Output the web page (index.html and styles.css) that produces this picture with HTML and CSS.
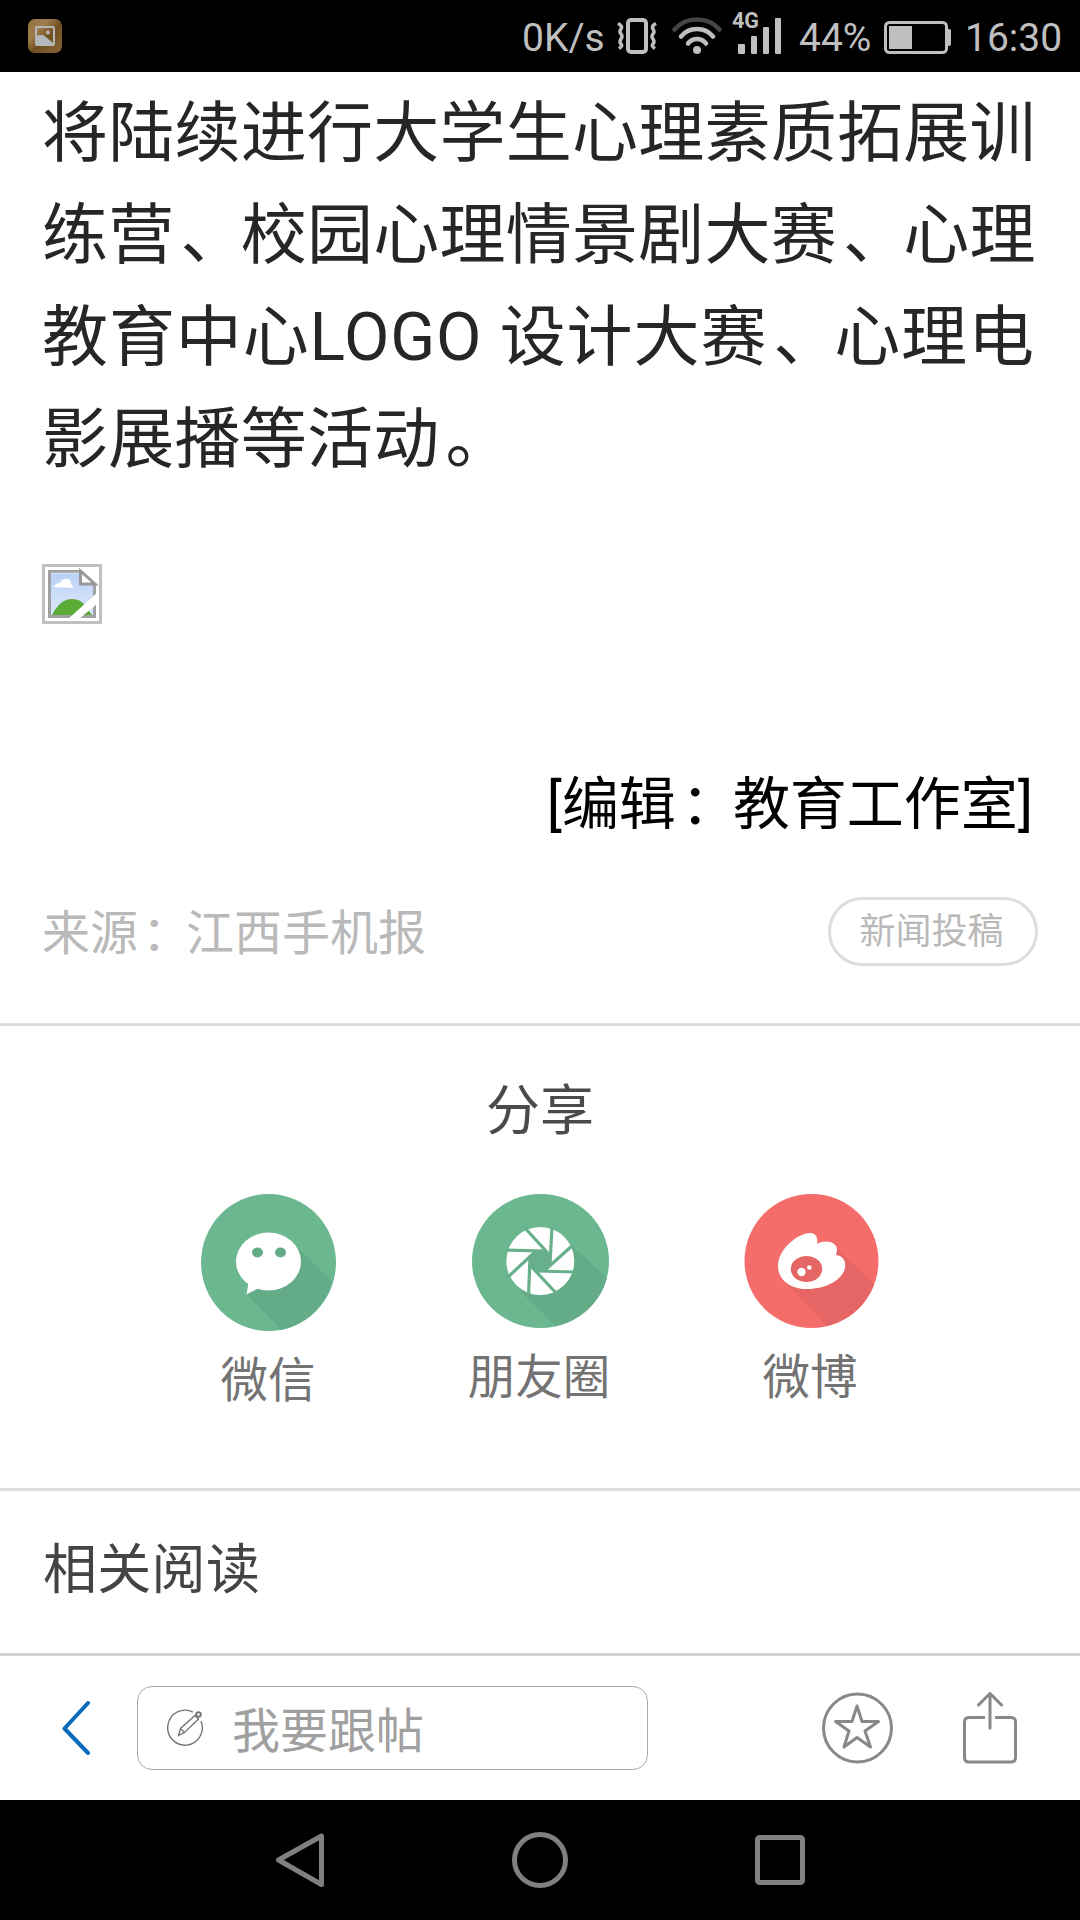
FILE: index.html
```html
<!DOCTYPE html>
<html lang="zh-CN">
<head>
<meta charset="utf-8">
<title>江西手机报</title>
<link rel="stylesheet" href="styles.css">
</head>
<body>
<header class="status">
  <svg class="notice" width="34" height="34" viewBox="0 0 34 34">
    <defs><linearGradient id="bronze" x1="0" y1="0" x2="1" y2="1"><stop offset="0" stop-color="#94703e"/><stop offset=".3" stop-color="#a17c4e"/><stop offset=".55" stop-color="#70501f"/><stop offset="1" stop-color="#8a6536"/></linearGradient></defs>
    <rect width="34" height="34" rx="7" fill="url(#bronze)"/>
    <rect x="8" y="8" width="18" height="18" rx="1" fill="none" stroke="#b4b8ba" stroke-width="2"/>
    <path d="M8 18l3-2h4l4 3 6 5v2H8z" fill="#b4b8ba"/><circle cx="20" cy="13.500" r="2" fill="#b4b8ba"/>
  </svg>
  <span class="speed">0K/s</span>
  <svg class="vibrate" width="40" height="36" viewBox="0 0 40 36" fill="none" stroke="#bfbfbf">
    <rect x="11" y="2" width="18" height="32" rx="3" stroke-width="4"/>
    <path d="M1 5.500q5 2.500 3 5.500t0 5 0 5 0 5-2 4.500M39 5.500q-5 2.500-3 5.500t0 5 0 5 0 5 2 4.500" stroke-width="3.500"/>
  </svg>
  <svg class="wifi" width="50" height="38" viewBox="0 0 50 38" fill="none" stroke="#bfbfbf" stroke-width="4.500" stroke-linecap="round">
    <path d="M2.500 12.500Q11 2.500 25 2.500t22.500 10" stroke="#444"/>
    <path d="M9 19.500q6-7.500 16-7.500t16 7.500M16 26.500q3.500-4.500 9-4.500t9 4.500"/><circle cx="25" cy="33" r="4" fill="#bfbfbf" stroke="none"/>
  </svg>
  <div class="signal"><span class="network">4G</span>
    <svg width="44" height="36" viewBox="0 0 44 36" fill="#bfbfbf"><rect width="7" height="10" y="26" rx="1"/><rect x="13" y="18" width="6" height="18" rx="1"/><rect x="25" y="9" width="6" height="27" rx="1"/><rect x="37" width="6" height="36" rx="1"/></svg>
  </div>
  <span class="percent">44%</span>
  <svg class="battery" width="67" height="33" viewBox="0 0 67 33"><rect x="1.500" y="1.500" width="61" height="30" rx="4" fill="none" stroke="#bfbfbf" stroke-width="3"/><path d="M5 5h23v23H5zM64 8h1q2 0 2 2v13q0 2-2 2h-1z" fill="#bfbfbf"/></svg>
  <span class="time">16:30</span>
</header>

<main class="page">
  <article class="article">
    <p class="body-text">将陆续进行大学生心理素质拓展训<br>练营<span class="mark">、</span>校园心理情景剧大赛<span class="mark">、</span>心理<br><span class="mixed">教育中心<span class="latin">LOGO </span>设计大赛<span class="mark">、</span>心理电</span><br>影展播等活动<span class="mark">。</span></p>
    <svg class="picture" width="60" height="60" viewBox="0 0 60 60">
      <defs><linearGradient id="sky" x1="0" y1="0" x2="0" y2="1"><stop offset="0" stop-color="#b9d0f5"/><stop offset="1" stop-color="#dde8fb"/></linearGradient></defs>
      <rect x="1.500" y="1.500" width="57" height="57" fill="#fff" stroke="#c0c0c0" stroke-width="3"/>
      <path d="M7.500 7.500H39L52.500 21V52.500H7.500z" fill="url(#sky)" stroke="#a0a0a0" stroke-width="3"/>
      <path d="M9 9h29" stroke="#fff" opacity=".5"/>
      <path d="M12 23q1-4 6-4 3-5 7-4 4 0 4 5 2 1 2 4z" fill="#fff"/>
      <path d="M10 51q8-16 20-16 8 0 13 6l7 10z" fill="#5aac37"/>
      <path d="M38.500 7v13H53z" fill="#fff" stroke="#999" stroke-width="3"/>
      <path d="M55 29L26 55h11l18-15z" fill="#fff"/>
    </svg>
    <p class="editor"><span class="bracket">[</span>编辑<span class="colon">：</span>教育工作室<span class="bracket">]</span></p>
    <div class="source"><p>来源<span class="colon">：</span>江西手机报</p><button class="submit">新闻投稿</button></div>
  </article>

  <section class="share">
    <h2 class="share-title">分享</h2>
    <div class="share-list">
      <a class="share-item wechat">
        <svg width="135" height="137" viewBox="0 0 135 137">
          <ellipse cx="67.500" cy="68.500" rx="67.500" ry="68.500" fill="#6ab790"/>
          <path d="M97 54L131 88A67.500 68.500 0 0 1 80 136L46 100z" fill="#64ab87"/>
          <ellipse cx="67.500" cy="67.500" rx="32.500" ry="29" fill="#fff"/><path d="M48 86l-2.500 14.500L60 93z" fill="#fff"/>
          <ellipse cx="56.500" cy="58.500" rx="5.500" ry="5" fill="#64ab87"/><ellipse cx="79.500" cy="58.500" rx="5.500" ry="5" fill="#64ab87"/>
        </svg><span>微信</span>
      </a>
      <a class="share-item moments">
        <svg width="137" height="134" viewBox="0 0 137 134">
          <ellipse cx="68.500" cy="67" rx="68.500" ry="67" fill="#6ab790"/>
          <path d="M98 50L135 84A68.500 67 0 0 1 84 132L46 95z" fill="#64ab87"/>
          <circle cx="68.300" cy="67" r="34" fill="#fff"/>
          <path d="M70 55.500L79.500 60 79 68 74 76 66 78.500 58 73 58 65 61 57z" fill="#67b08b"/>
          <g stroke="#67b08b" stroke-width="3.200"><path d="M53 34L79 62.500"/><path d="M80 33L78 70"/><path d="M101 51L72 77"/><path d="M104 78L65 77"/><path d="M84 99L57 70"/><path d="M56.500 102L58 64"/><path d="M36 83L64 57"/><path d="M34 56L72 57"/></g>
        </svg><span>朋友圈</span>
      </a>
      <a class="share-item weibo">
        <svg width="135" height="134" viewBox="0 0 135 134">
          <ellipse cx="67.500" cy="67" rx="67" ry="67" fill="#f56d6a"/>
          <path d="M92 53L130 90A67 67 0 0 1 83 132L45 92z" fill="#e56664"/>
          <path d="M34 72C34 56 52 40 66 39c7 0 8 6 7 11 9-5 20-2 20 6 0 2-1 3-1 5 8 1 10 7 9 13-2 11-18 21-38 21-18 0-29-10-29-23z" fill="#fff"/>
          <ellipse cx="62.500" cy="75" rx="15.700" ry="13" fill="#e56664"/><circle cx="57.500" cy="78" r="4.200" fill="#fff"/><circle cx="65.300" cy="73.500" r="2.300" fill="#fff"/>
        </svg><span>微博</span>
      </a>
    </div>
  </section>
  <h2 class="related">相关阅读</h2>
</main>

<footer class="toolbar">
  <svg class="back" width="28" height="56" viewBox="0 0 28 56" fill="none" stroke="#0a6bbd" stroke-width="4" stroke-linecap="round" stroke-linejoin="round"><path d="M26 3L2.500 28.500 26 53"/></svg>
  <div class="reply">
    <svg width="37" height="38" viewBox="0 0 37 38" fill="none" stroke="#777" stroke-width="1.400"><path d="M26 3.200A17.300 17.500 0 1 0 34 12"/><path d="M11.500 26.500l2-7L28 6.500l3.500 3.500L17.500 23.500zM13.500 19.500l4 4"/><circle cx="31.500" cy="5.500" r="2.300" stroke-width="2"/></svg>
    <span>我要跟帖</span>
  </div>
  <svg class="star" width="72" height="72" viewBox="0 0 72 72" fill="none" stroke="#888" stroke-width="3" stroke-linejoin="round"><circle cx="35.500" cy="36" r="34"/><path d="M35 14l5 15.500h16.500L43 39l5.500 16L35 45.500 22 55l5-16-13.500-9.500H30z"/></svg>
  <svg class="export" width="54" height="72" viewBox="0 0 54 72" fill="none" stroke="#888" stroke-width="3" stroke-linecap="round"><path d="M27 36V2M15.500 13L27 1.500 38.500 13"/><path d="M22 25.500H6Q1.500 25.500 1.500 30v35.500q0 4.500 4.500 4.500h42q4.500 0 4.500-4.500V30q0-4.500-4.500-4.500H32" stroke-linecap="butt"/></svg>
</footer>
<nav class="nav">
  <svg width="48" height="54" viewBox="0 0 48 54"><path d="M45.500 3v48.500L2.500 27z"/></svg>
  <svg width="56" height="56" viewBox="0 0 56 56"><circle cx="28" cy="28" r="25.500"/></svg>
  <svg width="50" height="50" viewBox="0 0 50 50"><rect x="2.500" y="2.500" width="45" height="45" rx="2"/></svg>
</nav>
</body>
</html>
```
FILE: styles.css
```css
* { box-sizing: border-box; margin: 0; padding: 0; }
body {
  width: 1080px; height: 1920px; overflow: hidden;
  display: flex; flex-direction: column;
  background: #fff;
  font-family: Roboto, "Noto Sans CJK SC", sans-serif;
  font-weight: 400;
}
svg { display: block; flex: none; }
.page, .toolbar { font-family: "Noto Sans CJK SC", sans-serif; }

.status {
  height: 72px; flex: none; padding: 0 0 0 28px;
  display: flex; align-items: center;
  background: #000; color: #bfbfbf; font-size: 39px; line-height: 72px;
}
.status span { white-space: nowrap; padding-top: 3px; }
.speed { width: 95px; margin-left: 460px; }
.wifi { margin-left: 15px; }
.signal { width: 50px; height: 42px; margin: -6px 0 0 9px; position: relative; padding: 6px 0 0 7px; }
.status .network { position: absolute; left: 1px; top: 1px; padding: 0; font-size: 21.500px; line-height: 15px; font-weight: 700; }
.percent { width: 85px; margin-left: 18px; }
.battery { margin-top: 3px; }
.time { margin-left: 14px; }

.article { height: 951px; padding: 4px 42px 0; display: flex; flex-direction: column; }
.body-text { height: 408px; font-size: 66px; line-height: 102px; letter-spacing: .25px; color: #262626; white-space: nowrap; }
.mixed { letter-spacing: .9px; }
.latin { font-family: Roboto, sans-serif; line-height: 0; }
.mark { margin: 0 -6px 0 6px; }
.colon { margin: 0 -.09em 0 .09em; }
.picture { margin-top: 80px; }
.editor { margin: 133px 5px 0 0; font-size: 57px; line-height: 84px; text-align: right; color: #000; }
.bracket { font-family: Roboto, sans-serif; line-height: 0; }
.source { margin-top: 56px; height: 69px; display: flex; justify-content: space-between; align-items: center; font-size: 48px; color: #b9b9b9; }
.source p { padding: 0 0 6px; }
.submit {
  width: 210px; height: 69px; padding: 0 3px 7px 0;
  border: 3px solid #ddd; border-radius: 35px; background: #fff;
  font: 36px/56px "Noto Sans CJK SC", sans-serif; color: #b9b9b9;
}

.share { height: 465px; border-top: 3px solid #ddd; }
.share-title { height: 168px; padding-top: 41px; font-size: 54px; line-height: 80px; font-weight: 400; text-align: center; color: #4a4a4a; }
.share-list { display: grid; grid-template-columns: repeat(3, 271px); justify-content: center; }
.share-item { display: flex; flex-direction: column; align-items: center; font-size: 47.500px; line-height: 70px; color: #737373; }
.share-item span { margin: 11px 2px 0 0; }
.wechat { padding-right: 2px; }
.wechat span { margin-right: 0; }
.related { height: 165px; border-top: 3px solid #ddd; padding: 35px 43px; font-size: 54px; line-height: 80px; letter-spacing: .3px; font-weight: 400; color: #444; }

.toolbar { height: 147px; flex: none; border-top: 3px solid #d0d0d0; display: flex; align-items: center; padding-left: 62px; }
.reply { width: 511px; height: 84px; margin-left: 47px; padding-left: 29px; border: 1px solid #aaa; border-radius: 15px; display: flex; align-items: center; gap: 28px; color: #a0a0a0; font-size: 48px; line-height: 76px; }
.reply span { padding-bottom: 2px; }
.star { margin-left: 174px; }
.export { margin-left: 69px; }

.nav { height: 120px; flex: none; padding-left: 276px; display: flex; align-items: center; gap: 187.500px; background: #000; }
.nav path, .nav circle, .nav rect { fill: none; stroke: #808080; stroke-width: 5; stroke-linejoin: round; }
```
